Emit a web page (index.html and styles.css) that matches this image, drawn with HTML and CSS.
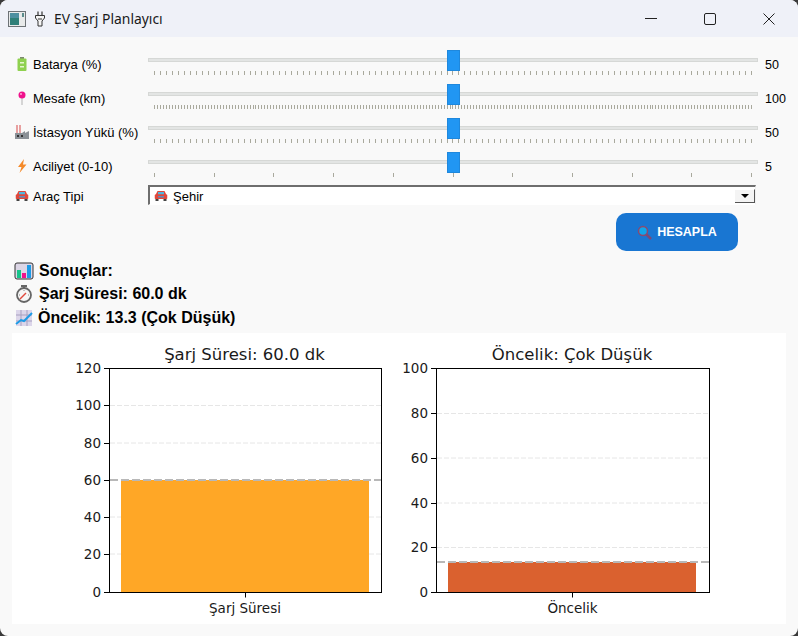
FILE: index.html
```html
<!DOCTYPE html>
<html lang="tr">
<head>
<meta charset="UTF-8">
<title>EV Şarj Planlayıcı</title>
<link rel="stylesheet" href="styles.css">
</head>
<body>
<div class="window">

<div class="titlebar">
  <svg class="app-icon" width="18" height="16" viewBox="0 0 18 16"><rect x=".5" y=".5" width="17" height="15" fill="#e8eaea" stroke="#6d7276"/><rect x="2" y="2" width="9" height="12" fill="#2f7f78"/><rect x="2" y="2" width="9" height="5" fill="#4d8fa0"/><rect x="14" y="2" width="2" height="4" fill="#5a8c8c"/></svg>
  <svg class="plug-icon" width="10" height="16" viewBox="0 0 10 16"><path d="M3 .5v4M7 .5v4" stroke="#333" stroke-width="1.200"/><path d="M.5 4.500h9v2.500l-2.500 3v5H3v-5L.5 7z" fill="#f4f4f4" stroke="#333"/><path d="M3 8h4" stroke="#333"/></svg>
  <span class="title">EV Şarj Planlayıcı</span>
  <div class="winbtns">
    <svg width="12" height="12" viewBox="0 0 12 12"><path d="M0 5.500h12" stroke="#222"/></svg>
    <svg width="12" height="12" viewBox="0 0 12 12"><rect x=".5" y=".5" width="11" height="11" rx="1.500" fill="none" stroke="#222"/></svg>
    <svg width="12" height="12" viewBox="0 0 12 12"><path d="M.5 .5l11 11M11.500 .5l-11 11" stroke="#222"/></svg>
  </div>
</div>

<div class="controls">
  <div class="row">
    <svg class="ico" width="12" height="14" viewBox="0 0 12 14"><rect x="4" y="0" width="4" height="2" fill="#7d8a70"/><rect x="1.500" y="1.500" width="9" height="12.500" rx="1" fill="#8fd14f"/><rect x="4" y="5" width="4" height="1.500" fill="#e6f5d0"/><rect x="4" y="9" width="4" height="1.500" fill="#e6f5d0"/></svg>
    <label class="lbl">Batarya (%)</label>
    <div class="slider"><div class="track"></div><div class="thumb"></div><div class="ticks t100"></div></div>
    <span class="val">50</span>
  </div>
  <div class="row">
    <svg class="ico" width="12" height="14" viewBox="0 0 12 14"><rect x="5" y="6" width="2" height="8" fill="#d5d5d5"/><circle cx="6" cy="4" r="3.500" fill="#f0128c"/><circle cx="5" cy="3" r="1" fill="#ffa6d5"/></svg>
    <label class="lbl">Mesafe (km)</label>
    <div class="slider"><div class="track"></div><div class="thumb"></div><div class="ticks t200"></div></div>
    <span class="val">100</span>
  </div>
  <div class="row">
    <svg class="ico" width="14" height="14" viewBox="0 0 14 14"><rect x="1" y="0" width="2" height="9" fill="#e8a0a0"/><rect x="4" y="0" width="2" height="9" fill="#e8a0a0"/><path d="M0 8h7l3-2v2l4-2v8H0z" fill="#8a9096"/><rect x="2" y="10" width="2" height="2" fill="#333"/><rect x="6" y="10" width="2" height="2" fill="#333"/></svg>
    <label class="lbl">İstasyon Yükü (%)</label>
    <div class="slider"><div class="track"></div><div class="thumb"></div><div class="ticks t100"></div></div>
    <span class="val">50</span>
  </div>
  <div class="row">
    <svg class="ico" width="14" height="14" viewBox="0 0 14 14"><path d="M9 0L3 8h3.500L4.500 14l7-8.500H8z" fill="#f58a2a"/></svg>
    <label class="lbl">Aciliyet (0-10)</label>
    <div class="slider"><div class="track"></div><div class="thumb"></div><div class="ticks t10"></div></div>
    <span class="val">5</span>
  </div>

  <div class="row-select">
    <svg class="ico" width="13" height="12" viewBox="0 0 13 12"><use href="#car"/></svg>
    <label class="lbl">Araç Tipi</label>
    <div class="select">
      <svg width="14" height="12" viewBox="0 0 13 12"><symbol id="car" viewBox="0 0 13 12"><path d="M3 1h7l2 4H1z" fill="#e0483c"/><rect x="3.500" y="2" width="6" height="2.500" fill="#4fb6e0"/><rect x="0" y="4.500" width="13" height="4.500" rx="1" fill="#e0483c"/><rect x="3.500" y="6" width="6" height="1.500" fill="#5a8cc0"/><rect x="1" y="9" width="3" height="2" fill="#444"/><rect x="9" y="9" width="3" height="2" fill="#444"/></symbol><use href="#car"/></svg>
      <span class="select-text">Şehir</span>
      <span class="select-arrow"></span>
    </div>
  </div>

  <div class="btn-row">
    <button class="calc-btn">
      <svg width="15" height="15" viewBox="0 0 15 15"><path d="M9 9l5 5" stroke="#7a4a78" stroke-width="2.500"/><circle cx="6" cy="6" r="4.500" fill="#12a5ea" stroke="#8a4a70" stroke-width="1.500"/></svg>
      HESAPLA
    </button>
  </div>
</div>

<div class="results">
  <div class="res-line">
    <svg width="20" height="18" viewBox="0 0 20 18"><rect x="1" y="1" width="18" height="16" rx="2" fill="#dcd6e6" stroke="#333"/><rect x="3" y="8" width="4" height="8" fill="#18c48a"/><rect x="8" y="11" width="4" height="5" fill="#f0128c"/><rect x="13" y="3" width="4" height="13" fill="#1c9be6"/></svg>
    <span>Sonuçlar:</span>
  </div>
  <div class="res-line">
    <svg width="20" height="18" viewBox="0 0 20 18"><rect x="7" y="0" width="6" height="2" fill="#666"/><rect x="9" y="1" width="2" height="3" fill="#666"/><circle cx="10" cy="10" r="7" fill="#f6f6f6" stroke="#666" stroke-width="1.800"/><path d="M6 14l6-6" stroke="#e0483c" stroke-width="1.500"/><path d="M5 10h1M14 10h1M10 5v1" stroke="#888"/></svg>
    <span>Şarj Süresi: 60.0 dk</span>
  </div>
  <div class="res-line">
    <svg class="trend" width="18" height="18" viewBox="0 0 18 18"><rect x="1" y="1" width="16" height="16" fill="#dcd6ea"/><path d="M6 1v16M12 1v16M1 6h16M1 12h16" stroke="#a8a0c0"/><path d="M1 15l5-4 3 1 8-8" fill="none" stroke="#1c9be6" stroke-width="2"/></svg>
    <span>Öncelik: 13.3 (Çok Düşük)</span>
  </div>
</div>

<div class="figure">
  <svg class="chart" width="387" height="291" viewBox="0 0 387 291">
    <text class="chart-title" x="232.500" y="27">Şarj Süresi: 60.0 dk</text>
    <g class="grid">
      <path d="M98 72.500H370M98 110H370M98 184H370M98 221H370"/>
    </g>
    <rect class="bar-time" x="109" y="147" width="248" height="112"/>
    <path class="ref-line" d="M98 147H370"/>
    <rect class="axes" x="97.500" y="35.500" width="272" height="224"/>
    <path class="tick" d="M92 35.500h5M92 72.500h5M92 110.500h5M92 147.500h5M92 184.500h5M92 221.500h5M92 259.500h5M233.500 259.500v5"/>
    <text class="ylab" x="89" y="40">120</text>
    <text class="ylab" x="89" y="77">100</text>
    <text class="ylab" x="89" y="115">80</text>
    <text class="ylab" x="89" y="152">60</text>
    <text class="ylab" x="89" y="189">40</text>
    <text class="ylab" x="89" y="226">20</text>
    <text class="ylab" x="89" y="264">0</text>
    <text class="xlab" x="233" y="280">Şarj Süresi</text>
  </svg>
  <svg class="chart" width="387" height="291" viewBox="0 0 387 291">
    <text class="chart-title" x="173" y="27">Öncelik: Çok Düşük</text>
    <g class="grid">
      <path d="M38 80.500H310M38 125H310M38 170H310M38 214.500H310"/>
    </g>
    <rect class="bar-prio" x="49" y="229" width="248" height="30"/>
    <path class="ref-line" d="M38 229H310"/>
    <rect class="axes" x="37.500" y="35.500" width="273" height="224"/>
    <path class="tick" d="M32 35.500h5M32 80.500h5M32 125.500h5M32 170.500h5M32 214.500h5M32 259.500h5M173.500 259.500v5"/>
    <text class="ylab" x="29" y="40">100</text>
    <text class="ylab" x="29" y="85">80</text>
    <text class="ylab" x="29" y="130">60</text>
    <text class="ylab" x="29" y="175">40</text>
    <text class="ylab" x="29" y="219">20</text>
    <text class="ylab" x="29" y="264">0</text>
    <text class="xlab" x="173.500" y="280">Öncelik</text>
  </svg>
</div>

</div>
</body>
</html>
```

FILE: styles.css
```css
*{
  margin: 0;
  padding: 0;
  box-sizing: border-box;
}

html, body{
  width: 798px;
  height: 636px;
  overflow: hidden;
  background: #3a3a3a;
}

.window{
  width: 798px;
  height: 636px;
  background: #f9f9f9;
  border-radius: 8px;
  overflow: hidden;
  font-family: "Liberation Sans", Arial, sans-serif;
  color: #000;
}

/* title bar */
.titlebar{
  height: 37px;
  background: #eff1f8;
  display: flex;
  align-items: center;
  padding-left: 8px;
}

.plug-icon{
  margin-left: 9px;
}

.title{
  margin-left: 9px;
  font-family: "Noto Sans", sans-serif;
  font-size: 13.900px;
  color: #1a1a1a;
}

.winbtns{
  margin-left: auto;
  display: flex;
  gap: 47px;
  padding-right: 23px;
}

/* sliders */
.controls{
  padding: 13px 0 0 15px;
}

.row{
  height: 34px;
  display: flex;
  align-items: flex-start;
}

.ico{
  flex: none;
  width: 14px;
  margin-top: 7px;
}

.lbl{
  width: 115px;
  margin-left: 4px;
  padding-top: 7px;
  font-size: 13px;
  white-space: nowrap;
}

.slider{
  width: 610px;
  height: 34px;
  position: relative;
}

.track{
  margin-top: 8px;
  height: 4px;
  background: #e3e5e4;
  border: 1px solid #d6d8d6;
}

.thumb{
  position: absolute;
  left: 299px;
  top: 0;
  width: 13px;
  height: 21px;
  background: #2196f3;
  border: 1px solid #1f88dd;
}

.ticks{
  margin: 9px 0 0 6px;
  width: 598px;
  height: 4px;
}

.t100{
  background: repeating-linear-gradient(90deg, #a9a99d 0 1px, transparent 1px 5.970px);
}

.t200{
  background: repeating-linear-gradient(90deg, #a9a99d 0 1px, transparent 1px 2.985px);
}

.t10{
  background: repeating-linear-gradient(90deg, #a9a99d 0 1px, transparent 1px 59.700px);
}

.val{
  margin-left: 7px;
  padding-top: 8px;
  font-size: 12.500px;
}

/* combo */
.row-select{
  height: 20px;
  margin-top: -1px;
  display: flex;
  align-items: center;
}

.row-select .ico{
  margin-top: 2px;
}

.row-select .lbl{
  padding-top: 2px;
  margin-left: 4px;
}

.select{
  width: 608px;
  height: 20px;
  display: flex;
  align-items: center;
  padding-left: 4px;
  gap: 5px;
  background: #fff;
  border-top: 2px solid #6e6e6e;
  border-left: 2px solid #6e6e6e;
  border-right: 1px solid #f0f0f0;
  border-bottom: 1px solid #fff;
}

.select-text{
  font-size: 13px;
  padding-top: 1px;
}

.select-arrow{
  margin-left: auto;
  margin-right: 0;
  width: 20px;
  height: 14px;
  background: #f4f4f4;
  border-right: 1px solid #555;
  border-bottom: 1px solid #555;
  border-top: 1px solid #fff;
  position: relative;
}

.select-arrow::after{
  content: "";
  position: absolute;
  left: 6px;
  top: 4px;
  border-left: 4px solid transparent;
  border-right: 4px solid transparent;
  border-top: 4px solid #000;
}

/* button */
.btn-row{
  display: flex;
  justify-content: flex-end;
  padding: 8px 60px 0 0;
}

.calc-btn{
  width: 122px;
  height: 38px;
  border: none;
  border-radius: 10px;
  background: #1976d2;
  color: #fff;
  font-family: "Liberation Sans", Arial, sans-serif;
  font-size: 12.500px;
  font-weight: bold;
  display: flex;
  align-items: center;
  justify-content: center;
  gap: 5px;
}

/* results */
.results{
  padding: 8px 0 0 14px;
}

.res-line{
  height: 23.500px;
  display: flex;
  align-items: center;
  gap: 5px;
  font-size: 16px;
  font-weight: bold;
}

.res-line .trend{
  margin-left: 1px;
}

/* charts */
.figure{
  width: 774px;
  height: 291px;
  margin: 3px 0 0 12px;
  background: #fff;
  display: flex;
}

.chart{
  display: block;
  font-family: "DejaVu Sans", sans-serif;
  fill: #1a1a1a;
}

.chart-title{
  font-size: 16.500px;
  text-anchor: middle;
}

.ylab{
  font-size: 13.500px;
  text-anchor: end;
}

.xlab{
  font-size: 13.500px;
  text-anchor: middle;
}

.grid path{
  fill: none;
  stroke: #e6e6e6;
  stroke-dasharray: 5 2;
}

.bar-time{
  fill: #ffa726;
}

.bar-prio{
  fill: #da612f;
}

.ref-line{
  fill: none;
  stroke: #b8b8b8;
  stroke-width: 2;
  stroke-dasharray: 8 3;
}

.axes{
  fill: none;
  stroke: #000;
}

.tick{
  fill: none;
  stroke: #000;
}
```
